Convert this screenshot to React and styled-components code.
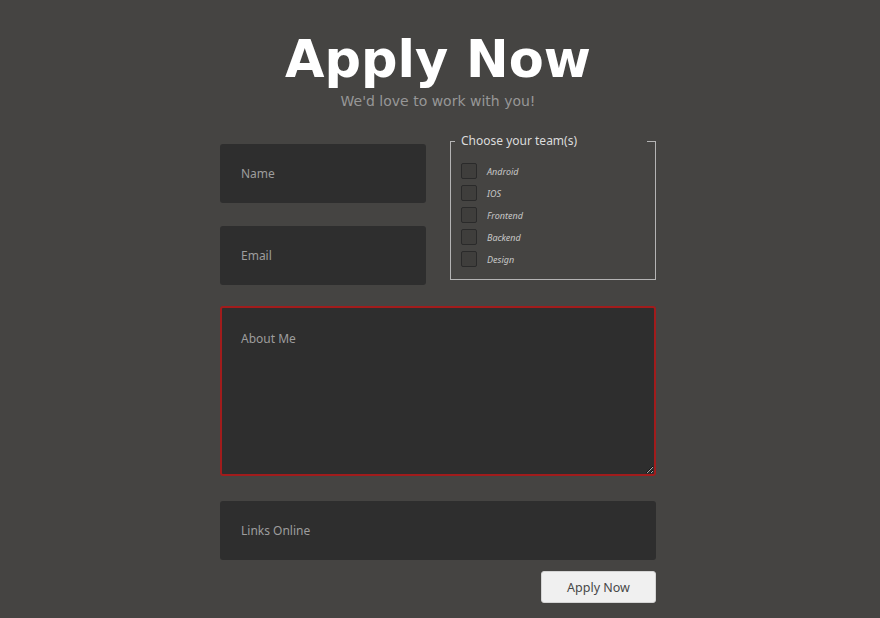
import React from 'react'
import styled, { createGlobalStyle } from 'styled-components'

const GlobalStyle = createGlobalStyle`
  body {
    margin: 0;
    background: #454442;
    font-family: "Noto Sans", "Open Sans", sans-serif;
  }
`

const Page = styled.main`
  display: flex;
  flex-direction: column;
  align-items: center;
  padding-right: 4px;
`

const Title = styled.h1`
  margin: 34px 0 0;
  font-family: "DejaVu Sans", sans-serif;
  font-weight: bold;
  font-size: 51px;
  line-height: 51px;
  color: #ffffff;
`

const Subtitle = styled.p`
  margin: 8px 0 0;
  font-family: "DejaVu Sans", sans-serif;
  font-size: 14px;
  line-height: 17px;
  color: #979797;
`

const Form = styled.form`
  width: 436px;
  margin-top: 24px;
  display: flex;
  flex-direction: column;
`

const TopRow = styled.div`
  display: grid;
  grid-template-columns: 206px 206px;
  justify-content: space-between;
  align-items: start;
`

const Stack = styled.div`
  display: flex;
  flex-direction: column;
  gap: 23px;
  padding-top: 10px;
`

const Field = styled.input`
  box-sizing: border-box;
  width: 100%;
  height: 59px;
  padding: 0 21px;
  border: none;
  border-radius: 3px;
  background: #2e2e2e;
  color: #ddd;
  font-family: "Noto Sans", sans-serif;
  font-size: 12px;
  outline: none;
  &::placeholder { color: #9d9d9d; }
`

const Area = styled.textarea`
  box-sizing: border-box;
  width: 100%;
  height: 170px;
  margin-top: 21px;
  padding: 22px 19px;
  border: 2px solid #a11c1c;
  border-radius: 3px;
  background: #2e2e2e;
  color: #ddd;
  font-family: "Noto Sans", sans-serif;
  font-size: 12px;
  outline: none;
  &::placeholder { color: #9d9d9d; }
`

const Links = styled(Field)`
  margin-top: 25px;
`

const Teams = styled.fieldset`
  box-sizing: border-box;
  min-width: 0;
  width: 206px;
  margin: 0;
  height: 146px;
  padding: 15px 10px 0;
  border: 1px solid #b4b4b4;
  border-radius: 0;
  display: flex;
  flex-direction: column;
  gap: 6px;
`

const Legend = styled.legend`
  box-sizing: border-box;
  width: 192px;
  padding: 0 0 0 6px;
  margin-left: -6px;
  font-size: 12px;
  line-height: 14px;
  color: #dcdcdc;
`

const Option = styled.label`
  display: flex;
  align-items: center;
  gap: 10px;
  height: 16px;
  font-size: 9px;
  font-style: italic;
  color: #c8c8c8;
`

const Box = styled.input.attrs({ type: 'checkbox' })`
  appearance: none;
  box-sizing: border-box;
  width: 16px;
  height: 16px;
  margin: 0;
  border: 1px solid #2a2a2a;
  border-radius: 2px;
  background: #3f3e3c;
`

const Actions = styled.div`
  display: flex;
  justify-content: flex-end;
  margin-top: 11px;
`

const Submit = styled.button`
  width: 115px;
  height: 32px;
  border: 1px solid #d4d4d4;
  border-radius: 3px;
  background: #f0f0f0;
  color: #484848;
  font-family: "Noto Sans", sans-serif;
  font-size: 12.5px;
  cursor: pointer;
`

const teams = ['Android', 'IOS', 'Frontend', 'Backend', 'Design']

export default function App() {
  return (
    <Page>
      <GlobalStyle />
      <Title>Apply Now</Title>
      <Subtitle>We'd love to work with you!</Subtitle>
      <Form onSubmit={e => e.preventDefault()}>
        <TopRow>
          <Stack>
            <Field placeholder="Name" />
            <Field placeholder="Email" />
          </Stack>
          <Teams>
            <Legend>Choose your team(s)</Legend>
            {teams.map(t => (
              <Option key={t}>
                <Box />
                {t}
              </Option>
            ))}
          </Teams>
        </TopRow>
        <Area placeholder="About Me" />
        <Links placeholder="Links Online" />
        <Actions>
          <Submit type="submit">Apply Now</Submit>
        </Actions>
      </Form>
    </Page>
  )
}
